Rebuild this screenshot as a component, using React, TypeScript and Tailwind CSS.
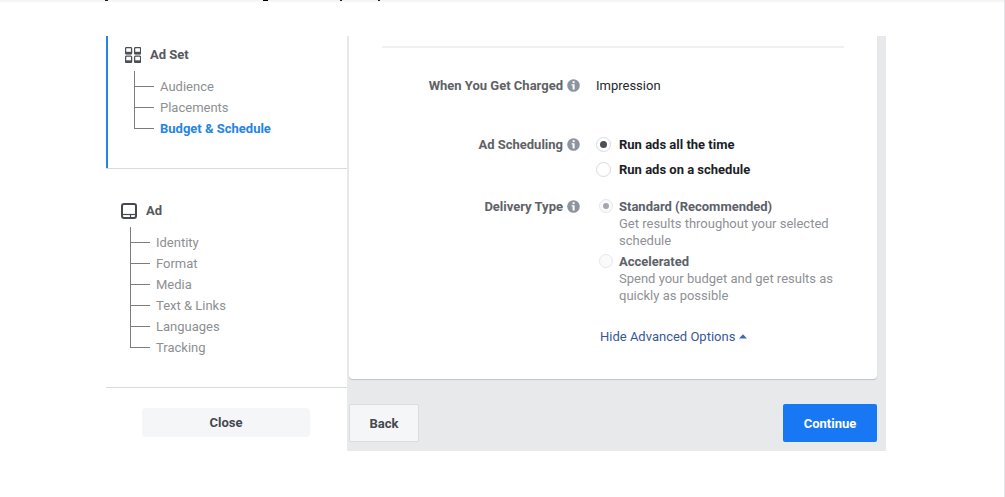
import { useId, useState, type ReactNode } from "react";
import clsx from "clsx";

function AdSetIcon() {
  return (
    <svg width="16" height="16" viewBox="0 0 16 16" fill="none" stroke="#4b4f56" aria-hidden="true">
      {[0, 9].map((x) =>
        [0, 8.5].map((y) => (
          <g key={`${x}-${y}`}>
            <rect x={x + 0.6} y={y + 0.6} width="6" height="6.3" rx="1" strokeWidth="1.3" />
            <path d={`M${x + 0.6} ${y + 6}h6`} strokeWidth="2.4" />
          </g>
        )),
      )}
    </svg>
  );
}

function AdIcon() {
  return (
    <svg width="16" height="16" viewBox="0 0 16 16" fill="none" stroke="#444950" aria-hidden="true">
      <rect x="1" y="1" width="14" height="14" rx="2" strokeWidth="2" />
      <path d="M1 11.5h14" strokeWidth="1.2" />
      <path d="M9.5 11.5v3.5" strokeWidth="1.2" />
    </svg>
  );
}

function InfoIcon() {
  return (
    <svg width="13" height="13" viewBox="0 0 13 13" aria-hidden="true" className="shrink-0">
      <circle cx="6.5" cy="6.5" r="6.3" fill="#8d949e" />
      <rect x="5.6" y="2.2" width="2" height="1.9" fill="#fff" />
      <path d="M4.6 5.2h3v5.2H5.6V6.5h-1z" fill="#fff" />
    </svg>
  );
}

function Tree({ items, active }: { items: string[]; active?: string }) {
  return (
    <div>
      <div className="h-[5px] w-5 border-l border-[#7b7c80]" />
      <ul>
        {items.map((item, i) => (
          <li key={item} className="flex h-[21px] items-center gap-1.5">
            <span className="flex h-full w-5 flex-col">
              <span className="h-[11px] border-b border-l border-[#7b7c80]" />
              {i < items.length - 1 && <span className="flex-1 border-l border-[#7b7c80]" />}
            </span>
            <a
              href={`#${item.toLowerCase().replace(/[^a-z]+/g, "-")}`}
              className={clsx(item === active ? "font-bold text-[#2484e8]" : "text-[#8d8f93]")}
            >
              {item}
            </a>
          </li>
        ))}
      </ul>
    </div>
  );
}

function Row({ label, children }: { label: string; children: ReactNode }) {
  return (
    <div className="grid grid-cols-[198px_1fr] gap-4">
      <div className="flex h-[17px] items-center justify-end gap-1 font-bold whitespace-nowrap text-[#606266]">
        {label}
        <InfoIcon />
      </div>
      <div>{children}</div>
    </div>
  );
}

const radioBase =
  "grid shrink-0 appearance-none place-content-center rounded-full border before:rounded-full before:content-['']";

function SchedulingOption({ label, checked, onChange }: { label: string; checked: boolean; onChange: () => void }) {
  const id = useId();
  return (
    <div className="flex items-center gap-2">
      <input
        id={id}
        type="radio"
        name="scheduling"
        checked={checked}
        onChange={onChange}
        className={clsx(radioBase, "size-[15px] border-[#d8dade] before:size-[7px] checked:before:bg-[#4b4f56]")}
      />
      <label htmlFor={id} className="font-bold text-[#1c1e26]">
        {label}
      </label>
    </div>
  );
}

function DeliveryOption({ label, detail, checked }: { label: string; detail: string; checked: boolean }) {
  const id = useId();
  return (
    <div className="flex gap-1.5 pl-[3px]">
      <input
        id={id}
        type="radio"
        name="delivery"
        defaultChecked={checked}
        disabled
        aria-describedby={`${id}-detail`}
        className={clsx(
          radioBase,
          "mt-px size-[14px] border-[#e6e7ea] bg-[#fafafb] before:size-[6px] checked:before:bg-[#a4a7ae]",
        )}
      />
      <div>
        <label htmlFor={id} className="block font-bold text-[#5c616b]">
          {label}
        </label>
        <p id={`${id}-detail`} className="text-[#8f9195]">
          {detail}
        </p>
      </div>
    </div>
  );
}

export default function App() {
  const [schedule, setSchedule] = useState("all");
  return (
    <div className="flex min-h-screen flex-col border-r border-[#e4e5e7] bg-white font-['Roboto','Liberation_Sans',sans-serif] text-[13px] leading-[17px]">
      <header className="h-9">
        <div className="h-[3px] bg-linear-to-b from-[#f1f1f1] to-white">
          <svg width="400" height="3" viewBox="0 0 400 3" aria-hidden="true">
            <rect x="105" width="3" height="1" fill="#1c1e21" />
            <rect x="263" width="5" height="1" fill="#000" />
            <rect x="340" width="2" height="1" fill="#0b1f4d" />
            <rect x="378" width="2" height="1" fill="#0b1f4d" />
          </svg>
        </div>
      </header>

      <div className="flex pr-[118px] pl-[106px]">
        <aside className="flex w-[241px] shrink-0 flex-col">
          <section className="border-b border-b-[#d8dadd] bg-white">
            <div className="border-l-2 border-[#2484e8] pt-[10px] pb-[29px] pl-[17px]">
              <h2 className="flex items-center gap-[9px] font-bold text-[#55585d]">
                <AdSetIcon />
                Ad Set
              </h2>
              <div className="pt-2 pl-[9px]">
                <Tree items={["Audience", "Placements", "Budget & Schedule"]} active="Budget & Schedule" />
              </div>
            </div>
          </section>

          <section className="border-b border-[#d8dadd] pt-[33px] pb-[29px] pl-[15px]">
            <h2 className="flex items-center gap-[9px] font-bold text-[#55585d]">
              <AdIcon />
              Ad
            </h2>
            <div className="pt-2 pl-[9px]">
              <Tree items={["Identity", "Format", "Media", "Text & Links", "Languages", "Tracking"]} />
            </div>
          </section>

          <div className="flex pt-5 pr-[37px] pl-9">
            <button type="button" className="h-[29px] flex-1 rounded bg-[#f5f6f7] font-bold text-[#444950]">
              Close
            </button>
          </div>
        </aside>

        <main className="min-w-0 flex-1 border-l-2 border-[#e9eaec] bg-[#e8e9eb] pr-[9px]">
          <div className="rounded-b bg-white px-[33px] pt-[10px] pb-[34px] shadow-[0_1px_1px_#bfc1c5]">
            <hr className="mb-[29px] border-t-2 border-[#f0f0f1]" />
            <Row label="When You Get Charged">
              <p className="text-[#26282c]">Impression</p>
            </Row>
            <div className="h-[42px]" />
            <Row label="Ad Scheduling">
              <div role="radiogroup" aria-label="Ad Scheduling" className="flex flex-col gap-2">
                <SchedulingOption
                  label="Run ads all the time"
                  checked={schedule === "all"}
                  onChange={() => setSchedule("all")}
                />
                <SchedulingOption
                  label="Run ads on a schedule"
                  checked={schedule === "custom"}
                  onChange={() => setSchedule("custom")}
                />
              </div>
            </Row>
            <div className="h-5" />
            <Row label="Delivery Type">
              <div role="radiogroup" aria-label="Delivery Type" className="flex flex-col gap-1">
                <DeliveryOption
                  label="Standard (Recommended)"
                  detail="Get results throughout your selected schedule"
                  checked
                />
                <DeliveryOption
                  label="Accelerated"
                  detail="Spend your budget and get results as quickly as possible"
                  checked={false}
                />
              </div>
            </Row>
            <div className="pt-6 pl-[218px]">
              <button type="button" className="flex items-center gap-1 text-[#385898]">
                Hide Advanced Options
                <svg width="8" height="5" viewBox="0 0 8 5" aria-hidden="true">
                  <path d="M0 4.5 4 0.3l4 4.2z" fill="#4267b2" />
                </svg>
              </button>
            </div>
          </div>

          <div className="flex justify-between pt-[25px] pb-[9px]">
            <button
              type="button"
              className="h-[38px] w-[70px] rounded-xs border border-[#dadde1] bg-[#f5f6f7] font-bold text-[#444950]"
            >
              Back
            </button>
            <button type="button" className="h-[38px] w-[94px] rounded-xs bg-[#1877f2] font-bold text-white">
              Continue
            </button>
          </div>
        </main>
      </div>
    </div>
  );
}
